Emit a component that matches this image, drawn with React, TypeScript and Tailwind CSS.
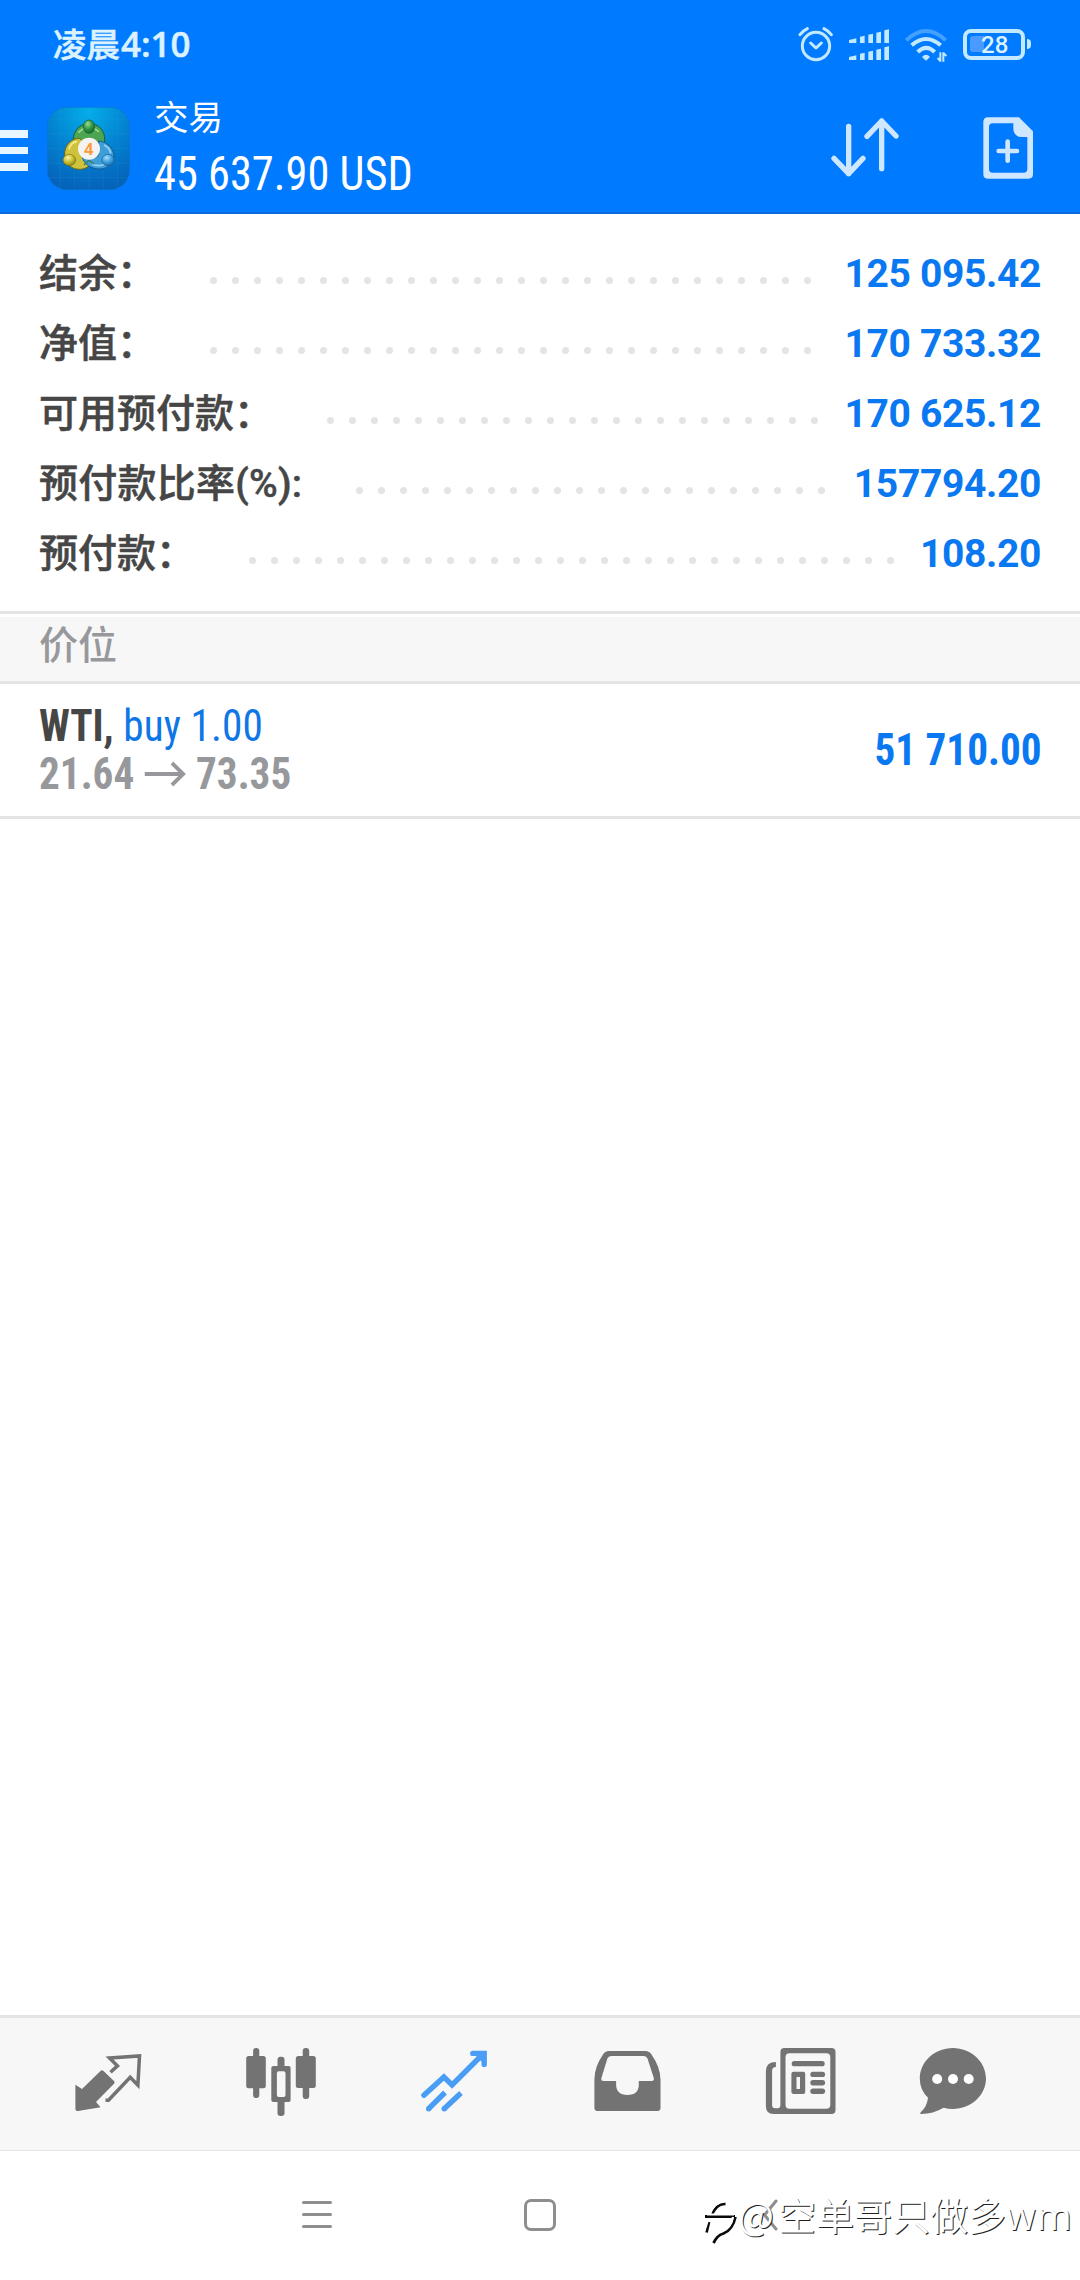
import type { ReactNode } from 'react';

const summary = [
    { label: '结余：', value: '125 095.42', dots: 28 },
    { label: '净值：', value: '170 733.32', dots: 28 },
    { label: '可用预付款：', value: '170 625.12', dots: 23 },
    { label: '预付款比率(%):', value: '157794.20', dots: 22 },
    { label: '预付款：', value: '108.20', dots: 30 },
];

const signalBars = [
    { x: 240, h: 22 },
    { x: 265, h: 28 },
    { x: 289, h: 34 },
    { x: 313, h: 41 },
];

function StatusBar() {
    return (
        <div className="flex h-[88px] items-center pl-[53px] pr-12 text-[#dcf2ff]">
            <div className="flex flex-1 items-baseline whitespace-nowrap pb-0.5 font-['Noto_Sans_CJK_SC',sans-serif] text-[33.5px] leading-[48px] font-medium [-webkit-text-stroke:0.5px]">
                凌晨<span className="ml-px font-['Open_Sans',sans-serif] text-[35px] font-semibold">4:10</span>
            </div>
            <div className="flex items-center text-[#c2e9ff]">
                <svg width="36" height="36" viewBox="54 78 108 108" fill="none" stroke="currentColor" strokeWidth="9" strokeLinecap="round" strokeLinejoin="round">
                    <circle cx="108" cy="138" r="41" />
                    <path d="M92 129l16 15 16-15M60 104q8-11 22-18M154 104q-8-11-22-18" />
                </svg>
                <svg className="ml-3.5" width="42" height="36" viewBox="204 78 126 108" fill="currentColor">
                    {[129, 180].map((bottom) => (
                        <g key={bottom}>
                            <path d={`M207 ${bottom}v-9l22-5v14z`} />
                            {signalBars.map((bar) => (
                                <path key={bar.x} d={`M${bar.x} ${bottom}v${-bar.h + 3}l14-3v${bar.h}z`} />
                            ))}
                        </g>
                    ))}
                </svg>
                <svg className="ml-3.5" width="45" height="36" viewBox="372 78 135 108" fill="none" stroke="currentColor" strokeWidth="12">
                    <path d="M379 121q59-56 118 0" opacity="0.35" />
                    <path d="M395 136q43-38 87 0M413 156q26-25 51 0" />
                    <path d="M426 171q12-13 24 0l-12 11z" fill="currentColor" stroke="none" />
                    <path d="M481 185v-28M473 174l8 9M490 185v-28M490 159l9 9" strokeWidth="6" />
                </svg>
                <div className="relative ml-[13px] flex h-9 w-[70px] items-center">
                    <div className="ml-px flex h-[31px] w-[62px] items-center rounded-[8px] border-4 border-current">
                        <div className="ml-[3px] h-4 w-3.5 rounded-l-[3px] bg-[#4a9bff]" />
                    </div>
                    <div className="ml-0.5 h-2.5 w-1 rounded-r-full bg-current" />
                    <span className="absolute left-[19px] top-[5px] font-['Roboto'] text-[24px] leading-[28px] font-medium text-[#dcf2ff]">28</span>
                </div>
            </div>
        </div>
    );
}

function AppLogo() {
    return (
        <svg width="83" height="83" viewBox="49 50 249 249">
            <defs>
                <radialGradient id="tile" cx="0.5" cy="0.05" r="0.95">
                    <stop offset="0" stopColor="#04aee9" />
                    <stop offset="0.55" stopColor="#0380cf" />
                    <stop offset="1" stopColor="#0563ba" />
                </radialGradient>
                <radialGradient id="green" cx="0.4" cy="0.3" r="0.8">
                    <stop offset="0" stopColor="#9bdc8c" />
                    <stop offset="0.5" stopColor="#2f9440" />
                    <stop offset="1" stopColor="#0f5f2c" />
                </radialGradient>
                <radialGradient id="yellow" cx="0.4" cy="0.3" r="0.8">
                    <stop offset="0" stopColor="#f7f0a0" />
                    <stop offset="0.5" stopColor="#c9bd2e" />
                    <stop offset="1" stopColor="#7f7a12" />
                </radialGradient>
                <radialGradient id="blue" cx="0.4" cy="0.3" r="0.8">
                    <stop offset="0" stopColor="#a5dcfa" />
                    <stop offset="0.5" stopColor="#3d9fdc" />
                    <stop offset="1" stopColor="#145f9e" />
                </radialGradient>
            </defs>
            <rect x="50" y="51" width="247" height="247" rx="58" fill="url(#tile)" stroke="#0c74cc" strokeWidth="2" />
            <path d="M88 52v245M131 52v245M175 52v245M218 52v245M261 52v245M51 87h245M51 131h245M51 175h245M51 219h245M51 262h245" stroke="#35a8e6" strokeOpacity="0.22" strokeWidth="2" />
            <g strokeLinejoin="round" strokeWidth="3">
                <path d="M175 100c30 0 48 22 47 48 0 16-6 28-12 34l-70 0c-8-10-12-22-12-34 0-26 18-48 47-48z" fill="#4ba552" stroke="#175f3a" />
                <path d="M146 144c-26 0-46 24-44 50 2 28 22 44 46 43 12 0 22-5 28-12l-4-62z" fill="#cfc23c" stroke="#6c6813" />
                <path d="M204 152c24 2 44 20 46 44-2 24-20 40-42 40-28 0-48-14-54-38 14 8 40 8 50-4z" fill="#3f9ed8" stroke="#165a94" />
                <path d="M143 127q32-30 62-2" fill="none" stroke="#9ad98f" strokeWidth="5" />
                <path d="M115 177q4-20 24-24" fill="none" stroke="#f3eb94" strokeWidth="5" />
                <path d="M220 164q18 8 20 26M184 222q20 8 38 0" fill="none" stroke="#98d3f4" strokeWidth="5" />
                <path d="M160 224l15-14 16 12" fill="none" stroke="#3d7d55" strokeWidth="4" />
            </g>
            <ellipse cx="175" cy="109" rx="17" ry="20" fill="url(#green)" stroke="#145c31" strokeWidth="2" />
            <ellipse cx="116" cy="209" rx="19" ry="17" fill="url(#yellow)" stroke="#77720f" strokeWidth="2" />
            <ellipse cx="232" cy="209" rx="19" ry="17" fill="url(#blue)" stroke="#175e99" strokeWidth="2" />
            <circle cx="175" cy="175" r="33" fill="#f3f3f1" />
            <text x="174" y="193" textAnchor="middle" fontFamily="Roboto" fontWeight="600" fontSize="52" fill="#ff9838">4</text>
        </svg>
    );
}

function Toolbar() {
    return (
        <div className="flex h-[126px] items-start border-b-2 border-[#0a6cdc]">
            <div className="mt-[42px] flex w-7 flex-col gap-[9px]">
                <div className="h-[7.5px] bg-[#e8f6ff]" />
                <div className="h-[7.5px] bg-[#e8f6ff]" />
                <div className="h-[7.5px] bg-[#e8f6ff]" />
            </div>
            <div className="ml-[19px] mt-[19px]">
                <AppLogo />
            </div>
            <div className="ml-6 flex-1 whitespace-nowrap text-white">
                <div className="mt-[5px] font-['Noto_Sans_CJK_SC',sans-serif] text-[34.5px] leading-[44px]">交易</div>
                <div className="mt-[9px] origin-left scale-x-[0.925] font-['Roboto_Condensed','Roboto',sans-serif] text-[48px] leading-[56px] font-stretch-condensed">45 637.90 USD</div>
            </div>
            <svg className="mt-7 text-[#cfe6ff]" width="70" height="66" viewBox="150 348 210 198" fill="none" stroke="currentColor" strokeWidth="16" strokeLinecap="round" strokeLinejoin="round">
                <path d="M206 379v142M162 475l44 46 43-46M305 506V363M261 409l44-46 43 45" />
            </svg>
            <svg className="ml-20 mr-11 mt-7 text-[#cfe6ff]" width="56" height="66" viewBox="600 348 168 198" fill="none">
                <path d="M624 352h93l42 42v129q0 13-13 13H623q-13 0-13-13V366q0-14 14-14zm14 18q-11 0-11 11v126q0 11 11 11h93q11 0 11-11V411h-15q-27 0-27-27v-14z" fill="currentColor" fillRule="evenodd" />
                <path d="M683 425v57M656 453h55" stroke="currentColor" strokeWidth="14" strokeLinecap="round" />
            </svg>
        </div>
    );
}

function SummaryRow({ label, value, dots }: { label: string; value: string; dots: number }) {
    // Latin glyphs in the label run slightly narrower than the CJK ones
    const labelSpacing = label.includes('%') ? 'tracking-[0.25px]' : '';

    return (
        <div className="flex h-[70px] items-center whitespace-nowrap">
            <span className={`pt-0.5 font-['Roboto','Noto_Sans_CJK_SC',sans-serif] text-[39px] font-medium text-[#464646] [-webkit-text-stroke:0.5px] ${labelSpacing}`}>{label}</span>
            <div className="ml-[54px] mt-3.5 flex flex-1 gap-[15px]">
                {Array.from({ length: dots }, (_, i) => (
                    <span key={i} className="size-[7px] shrink-0 rounded-full bg-[#e4e4e4]" />
                ))}
            </div>
            <span className="pt-0.5 font-['Roboto',sans-serif] text-[39px] font-bold tracking-[-0.35px] text-[#0a78f0]">{value}</span>
        </div>
    );
}

function Position() {
    return (
        <div className="flex h-[135px] items-center justify-between border-b-3 border-[#e4e4e4] pl-[39px] pr-[38px] font-['Roboto_Condensed','Roboto',sans-serif] text-[44px] leading-12 whitespace-nowrap font-stretch-condensed">
            <div className="origin-left scale-x-[0.936]">
                <div className="font-bold text-[#464646]">
                    WTI, <span className="font-normal text-[#0f76e6] tracking-[0.15px]">buy 1.00</span>
                </div>
                <div className="flex items-center font-bold text-[#97989c]">
                    21.64
                    <svg className="mx-2.5" width="46" height="26" viewBox="0 0 46 26" fill="none" stroke="currentColor" strokeWidth="4">
                        <path d="M1 13h41M30 2l12 11-12 11" />
                    </svg>
                    73.35
                </div>
            </div>
            <div className="origin-right scale-x-[0.936] font-bold text-[#0a78f0]">51 710.00</div>
        </div>
    );
}

function TabIcon({ children, className = '' }: { children: ReactNode; className?: string }) {
    return (
        <svg className={className} width="72" height="72" viewBox="0 0 72 72" fill="currentColor">
            {children}
        </svg>
    );
}

function TabBar() {
    return (
        <div className="flex h-[136px] gap-[101px] border-y border-t-3 border-[#e4e4e4] bg-[#f7f7f7] pl-[72px] pt-[29px] text-[#737373]">
            <TabIcon>
                <path d="M3.4 37.7l6.6 4.3L28.5 24q1.5-1.3 3 0L42 34q1.4 1.3 0 2.7L24 55l4.5 5.3L6 64q-2.6 0-2.6-2.6z" />
                <path d="M38.5 25.3l7-6.4-8-7.9 30-2-1.6 29.2-7.7-7.9L36.5 53.3h-3" fill="none" stroke="currentColor" strokeWidth="3.5" />
            </TabIcon>
            <TabIcon>
                <rect x="8.1" y="1" width="6.2" height="50" rx="3" />
                <rect x="1.2" y="9" width="19.6" height="32.3" rx="2.5" />
                <rect x="57.7" y="1" width="6.5" height="51" rx="3" />
                <rect x="50.8" y="9" width="20" height="32" rx="2.5" />
                <rect x="32.5" y="9.7" width="7" height="59.3" rx="3" />
                <rect x="26.3" y="19" width="19.3" height="36" rx="2" />
                <rect x="31.9" y="24.3" width="8.6" height="25.7" rx="2" fill="#f7f7f7" />
            </TabIcon>
            <TabIcon className="text-[#4a9df5]">
                <g fill="none" stroke="currentColor" strokeWidth="5.4">
                    <path d="M5.9 48.3l20-18.3 8.2 8L64 8M54.8 6.4h11.4v11" strokeLinecap="round" />
                    <path d="M10.7 61.7L27 45.5M26.2 61.7L43 46" />
                </g>
                <path d="M57 8l9-1-1 9z" />
                <circle cx="10.7" cy="61.7" r="2.7" />
                <circle cx="26.2" cy="61.7" r="2.7" />
            </TabIcon>
            <TabIcon>
                <path fillRule="evenodd" d="M18 4h36.500q4 0 6 3.500 9 13 9 25V61q0 3-3 3H6.400q-3 0-3-3V32.500Q3.400 20 12 7.500 14 4 18 4zM20 9q-2.500 0-3.600 2.500L10.400 31q-.6 3 2 3h12.700v3q0 11 11.400 11t11.300-11v-3h13q2.600 0 2-3L56.500 11.500Q55.500 9 53 9z" />
            </TabIcon>
            <TabIcon className="ml-px">
                <path fillRule="evenodd" d="M19.400 1h47.100q4 0 4 4v58q0 4-4 4H8.500q-7.600 0-7.600-8V24q0-9 10-9v5q-3.800 0-3.800 4v34q0 3.300 3 3.300h2.300q3 0 3-3.300V5q0-4 4-4zm5 5.300q-3.900 0-3.900 4v47.400q0 4 4 4h36.800q4 0 4-4V10.300q0-4-4-4z" />
                <rect x="26.7" y="14" width="33" height="5.3" rx="2.6" />
                <path fillRule="evenodd" d="M28.400 24.700h9.800q2 0 2 2V45q0 2-2 2h-9.800q-2 0-2-2V26.700q0-2 2-2zM31.500 30v12H35V30z" />
                <rect x="45.300" y="24.700" width="14.800" height="5.400" rx="2.700" />
                <rect x="45.300" y="33" width="14.800" height="5.400" rx="2.700" />
                <rect x="45.300" y="41.500" width="14.800" height="5.400" rx="2.700" />
            </TabIcon>
            <TabIcon className="-ml-[21px]">
                <path d="M35.900 1C54 1 69 15 69 31.500S54 62 35.900 62q-5 0-9.300-1.200Q16 67 4.500 67q-2.500 0-.5-2 6-5.500 7-14.300Q2.800 43 2.800 31.500C2.800 15 17.500 1 35.900 1z" />
                <circle cx="20.200" cy="32" r="5" fill="#fff" />
                <circle cx="36" cy="32" r="5" fill="#fff" />
                <circle cx="51.700" cy="32" r="5" fill="#fff" />
            </TabIcon>
        </div>
    );
}

function SystemNav() {
    return (
        <div className="relative flex h-[129px] items-start bg-white pt-12 text-[#8e8e8e]">
            <div className="ml-[302px] mt-0.5 flex w-[30px] flex-col gap-[9px]">
                <div className="h-[3px] rounded-full bg-current" />
                <div className="h-[3px] rounded-full bg-current" />
                <div className="h-[3px] rounded-full bg-current" />
            </div>
            <div className="ml-48 size-8 rounded-[7px] border-3 border-current" />
            <svg className="ml-[206px]" width="16" height="32" viewBox="0 0 16 32" fill="none" stroke="currentColor" strokeWidth="3" strokeLinecap="round">
                <path d="M14 2L2.500 16 14 30" />
            </svg>
            <div className="absolute left-[702px] top-9 flex items-center text-white">
                <svg className="overflow-visible" width="36" height="48" viewBox="0 0 36 48" fill="none">
                    <path d="M4.500 41.500L7 31M3 25.500h30M9.500 25q5-13 14-12M33.500 26q-3 13-12 16.500-6 1.500-10 9.500" stroke="#0a0a0a" strokeWidth="2.800" />
                    <path d="M2 41L6 29M5 23.500h27M7.500 24q4-13 16-13.500M31 26q-2 11-11 14-6 1.500-9 7" stroke="#fff" strokeWidth="2.200" />
                </svg>
                <span className="whitespace-nowrap font-['Noto_Sans_CJK_SC',sans-serif] text-[38px] leading-[54px] text-white [text-shadow:1px_1px_0_#222]">
                    <span className="inline-block w-10">@</span>空单哥只做多<span className="font-['Open_Sans',sans-serif] tracking-wide">wm</span>
                </span>
            </div>
        </div>
    );
}

export default function App() {
    return (
        <div className="flex h-[2280px] w-[1080px] flex-col overflow-hidden bg-white">
            <header className="bg-[#007aff]">
                <StatusBar />
                <Toolbar />
            </header>
            <main className="flex-1">
                <section className="pb-[23px] pl-[39px] pr-[39px] pt-6">
                    {summary.map((row) => (
                        <SummaryRow key={row.label} {...row} />
                    ))}
                </section>
                <div className="border-y-3 border-[#e4e4e4] pt-[3px]">
                    <h2 className="h-16 bg-[#f7f7f7] px-[39px] font-['Noto_Sans_CJK_SC',sans-serif] text-[39px] leading-[51px] font-medium text-[#97989c]">价位</h2>
                </div>
                <Position />
            </main>
            <TabBar />
            <SystemNav />
        </div>
    );
}
